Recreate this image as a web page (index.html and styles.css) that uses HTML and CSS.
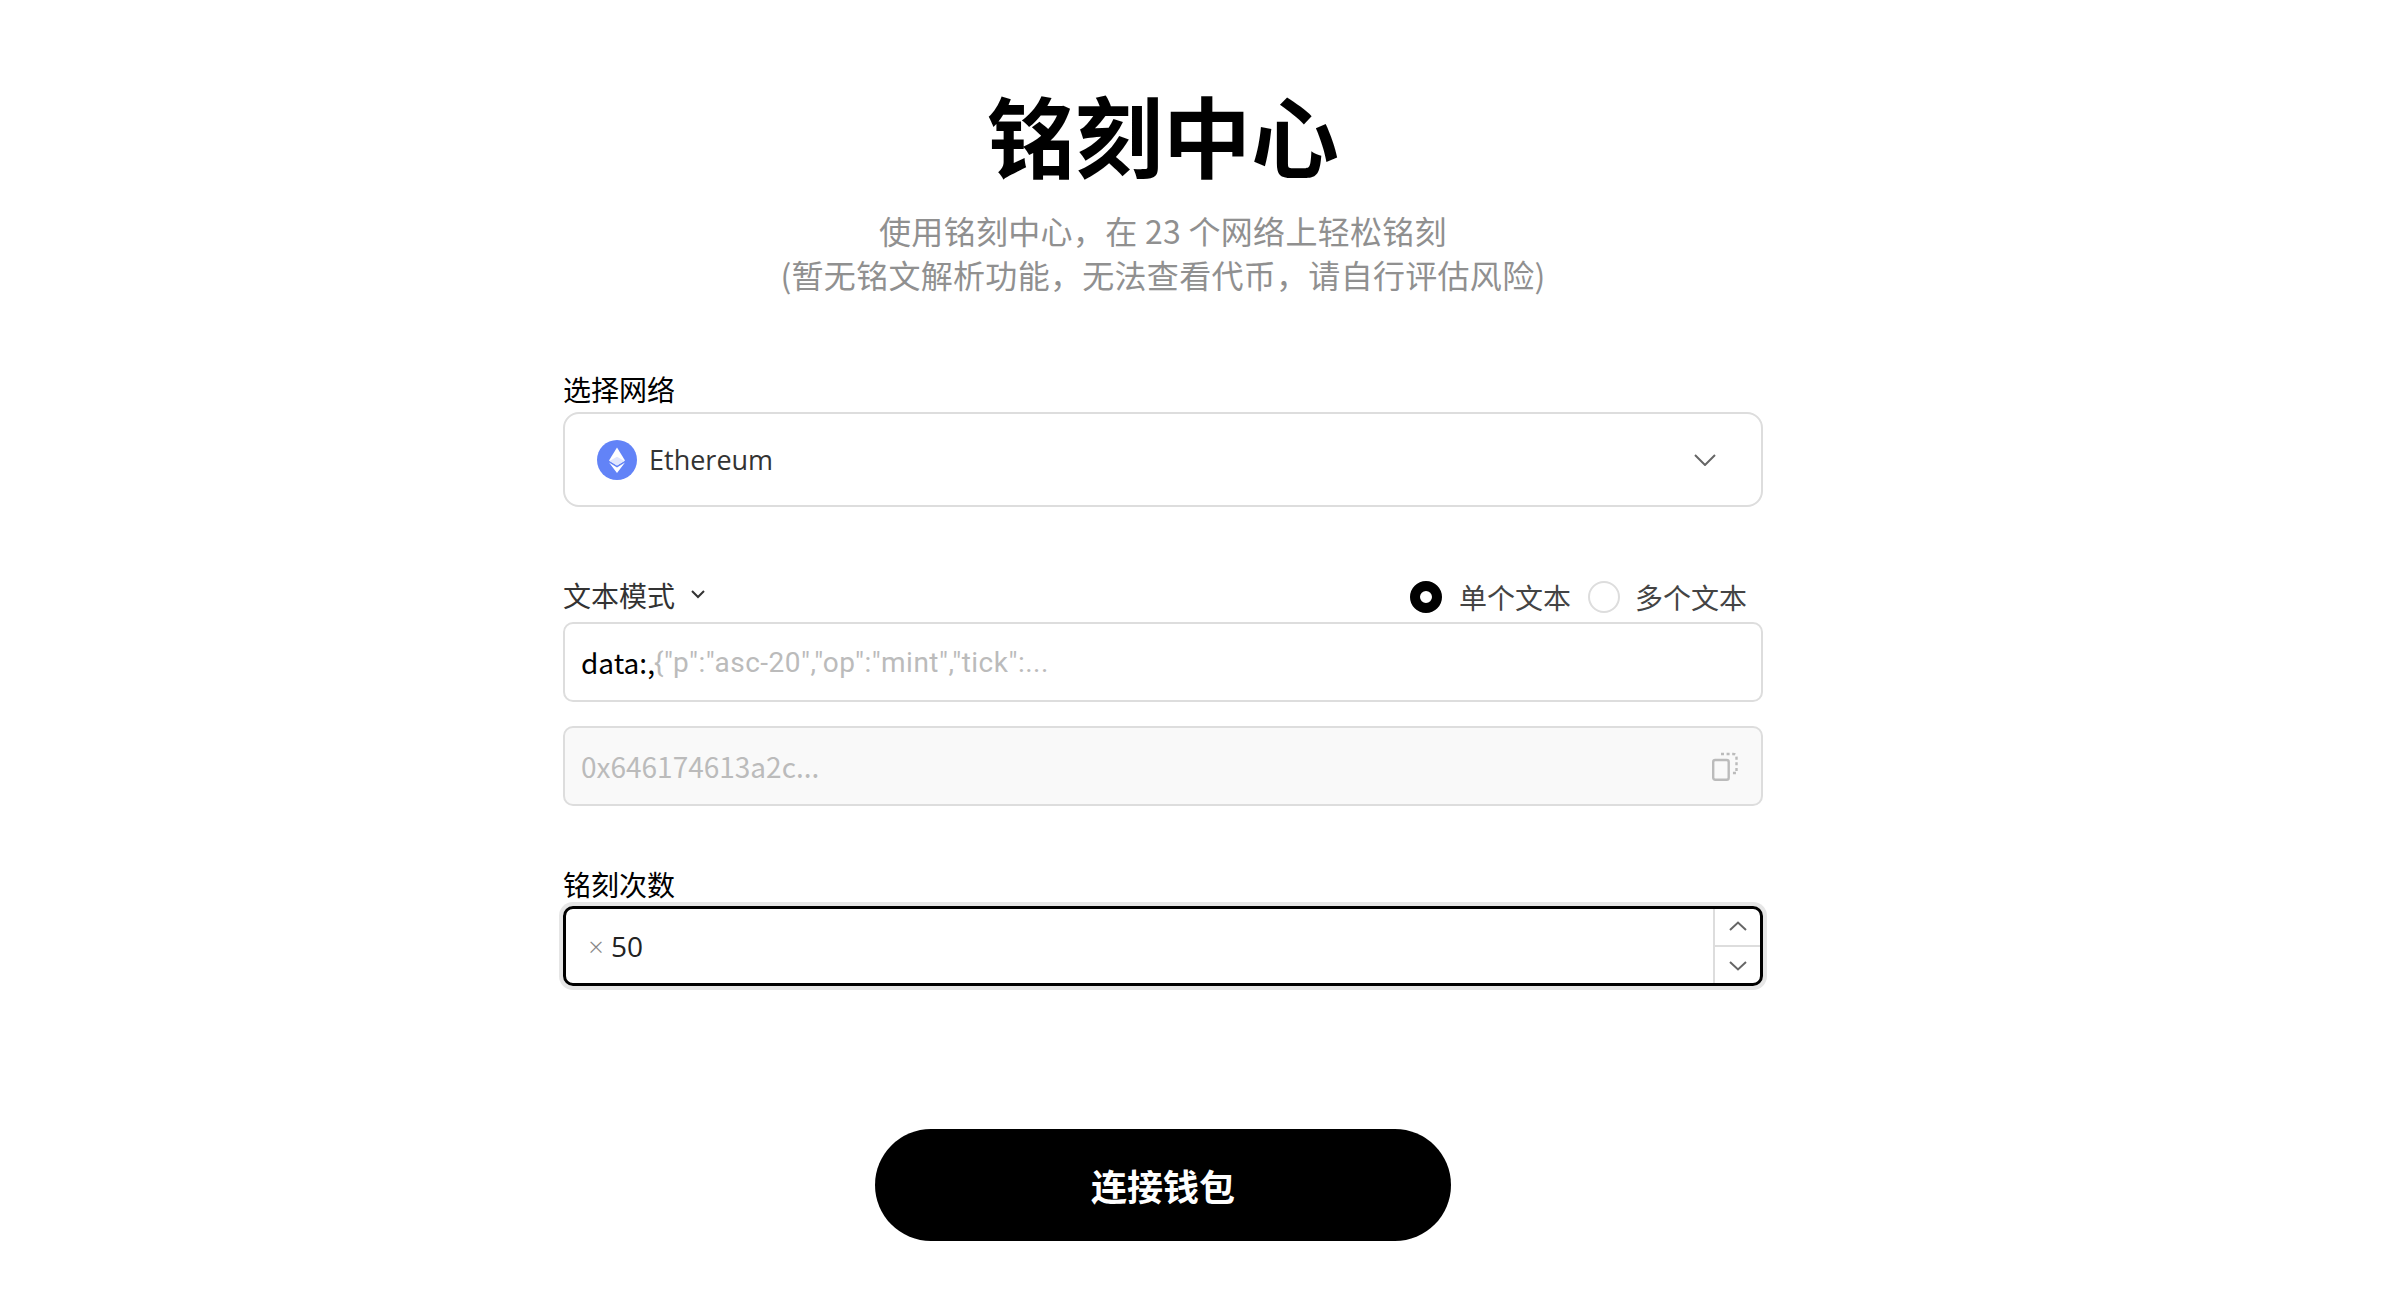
FILE: index.html
```html
<!DOCTYPE html>
<html lang="zh-CN">
<head>
<meta charset="UTF-8">
<title>铭刻中心</title>
<link rel="stylesheet" href="styles.css">
</head>
<body>
<div class="container">
<h1>铭刻中心</h1>
<p class="intro">使用铭刻中心，在 23 个网络上轻松铭刻<br>(暂无铭文解析功能，无法查看代币，请自行评估风险)</p>

<form class="form">
<label class="field-label">选择网络</label>
<div class="select">
<svg class="eth-icon" viewBox="0 0 40 40">
<circle cx="20" cy="20" r="20" fill="#6283f7"/>
<path d="M20 7.5 L28 20.6 L20 25.4 L12 20.6 Z" fill="#fff"/>
<path d="M12 22.6 L20 27.4 L28 22.6 L20 33 Z" fill="#fff"/>
<path d="M12.5 20.9 L20 16.8 L27.5 20.9 L20 25.4 Z" fill="#dfe5fd"/>
</svg>
<span class="select-text">Ethereum</span>
<svg class="select-arrow" viewBox="0 0 22 12"><path d="M1 1 L11 11 L21 1" fill="none" stroke="#666" stroke-width="2"/></svg>
</div>

<div class="mode-row">
<div class="mode-label">文本模式
<svg class="mode-arrow" viewBox="0 0 14 9"><path d="M1 1 L7 7 L13 1" fill="none" stroke="#333" stroke-width="2"/></svg>
</div>
<div class="radio-group">
<span class="radio radio-on"></span><span class="radio-text">单个文本</span>
<span class="radio"></span><span class="radio-text">多个文本</span>
</div>
</div>
<div class="input"><span class="prefix">data:,</span><span class="placeholder placeholder-json">{"p":"asc-20","op":"mint","tick":...</span></div>
<div class="input input-disabled">
<span class="placeholder">0x646174613a2c...</span>
<svg class="copy-icon" viewBox="0 0 26 29" fill="none" stroke="#bbb" stroke-width="2.4">
<rect x="1.2" y="8" width="15.5" height="19.8" rx="2"/>
<path d="M9 2 H21 Q24.5 2 24.5 5.5 V21 H20" stroke-dasharray="3 2.6"/>
</svg>
</div>

<label class="field-label count-label">铭刻次数</label>
<div class="count-input">
<span class="times">×</span><span class="count-value">50</span>
<div class="stepper">
<div class="step step-up"><svg viewBox="0 0 18 10"><path d="M1 9 L9 1.5 L17 9" fill="none" stroke="#666" stroke-width="2"/></svg></div>
<div class="step step-down"><svg viewBox="0 0 18 10"><path d="M1 1 L9 8.5 L17 1" fill="none" stroke="#666" stroke-width="2"/></svg></div>
</div>
</div>

<button type="button" class="connect">连接钱包</button>
</form>
</div>
</body>
</html>
```

FILE: styles.css
```css
* {
    box-sizing: border-box;
}
body {
    margin: 0;
    background: #fff;
    font-family: "Noto Sans CJK SC", "Open Sans", sans-serif;
}
.container {
    width: 2326px;
    padding-top: 73px;
    text-align: center;
}
h1 {
    margin: 0;
    font-size: 88px;
    line-height: 120px;
    font-weight: 700;
    color: #000;
}
.intro {
    margin: 15px 0 0;
    font-size: 32px;
    line-height: 44px;
    letter-spacing: 0.3px;
    color: #909090;
}
.form {
    width: 1200px;
    margin: 73px auto 0;
    text-align: left;
}
.field-label {
    display: block;
    margin-bottom: 3px;
    font-size: 28px;
    line-height: 40px;
    color: #000;
}
.select {
    display: flex;
    align-items: center;
    height: 95px;
    padding: 0 45px 0 32px;
    border: 2px solid #ddd;
    border-radius: 16px;
}
.eth-icon {
    width: 40px;
    height: 40px;
}
.select-text {
    margin-left: 12px;
    font-family: "Open Sans", sans-serif;
    font-size: 27px;
    color: #333;
}
.select-arrow {
    width: 22px;
    height: 12px;
    margin-left: auto;
}
.mode-row {
    display: flex;
    justify-content: space-between;
    align-items: center;
    height: 46px;
    margin-top: 69px;
}
.mode-label {
    display: flex;
    align-items: center;
    margin-bottom: 9px;
    font-size: 28px;
    color: #333;
}
.mode-arrow {
    width: 14px;
    height: 9px;
    margin-left: 16px;
}
.radio-group {
    display: flex;
    align-items: center;
    margin-bottom: 5px;
    padding-right: 16px;
}
.radio {
    width: 32px;
    height: 32px;
    border: 2px solid #ddd;
    border-radius: 50%;
}
.radio-on {
    border: 10px solid #000;
}
.radio-text {
    margin-left: 17px;
    margin-right: 17px;
    font-size: 28px;
    color: #444;
}
.radio-text:last-child {
    margin-left: 15px;
    margin-right: 0;
}
.input {
    display: flex;
    align-items: center;
    height: 80px;
    padding: 0 16px;
    border: 2px solid #ddd;
    border-radius: 10px;
    font-size: 28px;
}
.prefix {
    color: #000;
}
.placeholder {
    color: #bbb;
}
.placeholder-json {
    margin-left: -1px;
    font-family: Roboto, sans-serif;
    letter-spacing: 0.5px;
}
.input-disabled {
    justify-content: space-between;
    margin-top: 24px;
    padding-right: 23px;
    background: #f9f9f9;
}
.copy-icon {
    width: 26px;
    height: 29px;
}
.count-label {
    margin: 58px 0 2px;
}
.count-input {
    display: flex;
    align-items: center;
    height: 80px;
    padding-left: 21px;
    border: 3px solid #000;
    border-radius: 10px;
    box-shadow: 0 0 0 4px #e6e6e6;
    font-size: 28px;
}
.times {
    font-size: 18px;
    color: #888;
}
.count-value {
    margin-left: 6px;
    font-family: "Open Sans", sans-serif;
    color: #222;
}
.stepper {
    display: flex;
    flex-direction: column;
    align-self: stretch;
    width: 47px;
    margin-left: auto;
    border-left: 2px solid #ddd;
}
.step {
    flex: 1;
    display: flex;
    align-items: center;
    justify-content: center;
}
.step svg {
    width: 18px;
    height: 10px;
}
.step-up {
    padding-bottom: 2px;
}
.step-down {
    padding-top: 2px;
    border-top: 2px solid #ddd;
}
.connect {
    display: block;
    width: 576px;
    height: 112px;
    margin: 143px auto 0;
    border: none;
    border-radius: 56px;
    background: #000;
    color: #fff;
    font-family: inherit;
    font-size: 36px;
    font-weight: 700;
    cursor: pointer;
}
```
